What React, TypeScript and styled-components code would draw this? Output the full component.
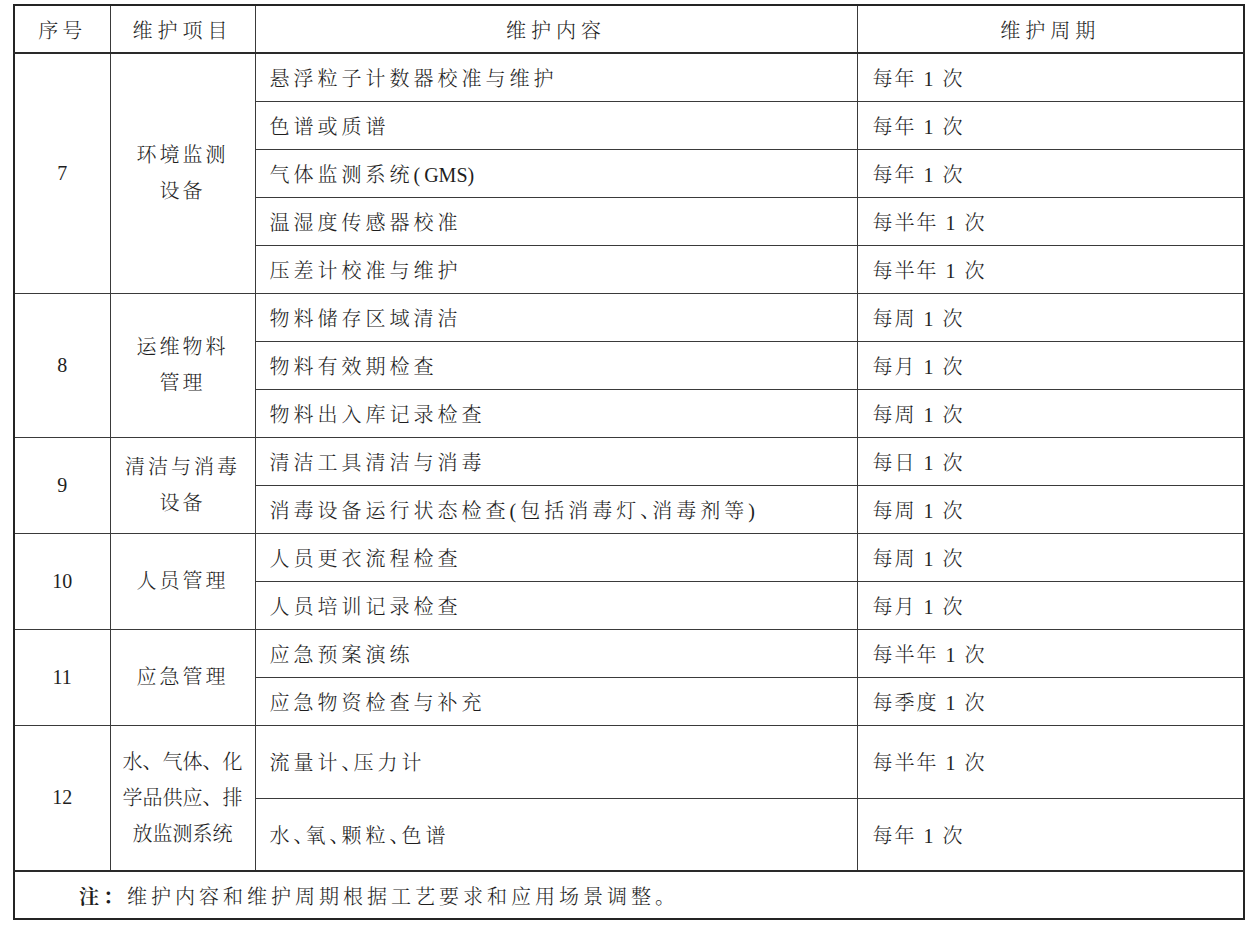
import React from "react";
import styled, { createGlobalStyle } from "styled-components";

const GlobalStyle = createGlobalStyle`
  html, body { margin: 0; padding: 0; background: #ffffff; }
  body {
    font-family: "Liberation Serif", "Noto Serif CJK SC", "Noto Sans CJK SC", serif;
    color: #1e1e1e;
  }
`;

const Page = styled.div`
  padding: 4px 13px 0 13px;
  width: 1230px;
`;

const Table = styled.table`
  width: 1230px;
  table-layout: fixed;
  border-collapse: collapse;
  border: 2px solid #242424;
  font-size: 20px;
  font-weight: 300;
`;

const HeadCell = styled.th<{ $spacing?: number }>`
  height: 46px;
  padding: 0;
  font-weight: 300;
  text-align: center;
  vertical-align: middle;
  letter-spacing: ${(p) => p.$spacing ?? 5}px;
  border: 1px solid #3a3a3a;
  border-bottom: 2px solid #2a2a2a;
`;

const Row = styled.tr<{ $h: number }>`
  height: ${(p) => p.$h}px;
`;

const NoCell = styled.td`
  padding: 0;
  text-align: center;
  vertical-align: middle;
  border: 1px solid #3a3a3a;
`;

const ItemCell = styled.td<{ $spacing: number }>`
  padding: 0 4px;
  text-align: center;
  vertical-align: middle;
  line-height: 36px;
  letter-spacing: ${(p) => p.$spacing}px;
  border: 1px solid #3a3a3a;
`;

const ContentCell = styled.td`
  padding: 0 0 0 14px;
  text-align: left;
  vertical-align: middle;
  letter-spacing: 4px;
  white-space: nowrap;
  border: 1px solid #3a3a3a;
`;

const PeriodCell = styled.td`
  padding: 0 0 0 15px;
  text-align: left;
  vertical-align: middle;
  letter-spacing: 2px;
  border: 1px solid #3a3a3a;
`;

const NoteCell = styled.td`
  height: 46px;
  padding: 0 0 0 64px;
  vertical-align: middle;
  letter-spacing: 4px;
  border-top: 2px solid #2a2a2a;
`;

const Bold = styled.b`
  font-weight: 700;
`;

/* narrow enumeration comma, as set in the original print */
const Comma = styled.span`
  letter-spacing: -8px;
`;

const Latin = styled.span`
  letter-spacing: 0;
`;

/* render a string, tightening 、 and Latin runs */
function Rich({ text }: { text: string }) {
  const parts = text.split(/(、|[A-Za-z]+)/).filter((s) => s !== "");
  return (
    <>
      {parts.map((p, i) =>
        p === "、" ? (
          <Comma key={i}>、</Comma>
        ) : /^[A-Za-z]+$/.test(p) ? (
          <Latin key={i}>{p}</Latin>
        ) : (
          <React.Fragment key={i}>{p}</React.Fragment>
        )
      )}
    </>
  );
}

type Group = {
  no: string;
  item: string[];
  spacing: number;
  rowH: number;
  rows: [string, string][];
};

const groups: Group[] = [
  {
    no: "7",
    item: ["环境监测", "设备"],
    spacing: 3,
    rowH: 48,
    rows: [
      ["悬浮粒子计数器校准与维护", "每年 1 次"],
      ["色谱或质谱", "每年 1 次"],
      ["气体监测系统(GMS)", "每年 1 次"],
      ["温湿度传感器校准", "每半年 1 次"],
      ["压差计校准与维护", "每半年 1 次"],
    ],
  },
  {
    no: "8",
    item: ["运维物料", "管理"],
    spacing: 3,
    rowH: 48,
    rows: [
      ["物料储存区域清洁", "每周 1 次"],
      ["物料有效期检查", "每月 1 次"],
      ["物料出入库记录检查", "每周 1 次"],
    ],
  },
  {
    no: "9",
    item: ["清洁与消毒", "设备"],
    spacing: 3,
    rowH: 48,
    rows: [
      ["清洁工具清洁与消毒", "每日 1 次"],
      ["消毒设备运行状态检查(包括消毒灯、消毒剂等)", "每周 1 次"],
    ],
  },
  {
    no: "10",
    item: ["人员管理"],
    spacing: 3,
    rowH: 48,
    rows: [
      ["人员更衣流程检查", "每周 1 次"],
      ["人员培训记录检查", "每月 1 次"],
    ],
  },
  {
    no: "11",
    item: ["应急管理"],
    spacing: 3,
    rowH: 48,
    rows: [
      ["应急预案演练", "每半年 1 次"],
      ["应急物资检查与补充", "每季度 1 次"],
    ],
  },
  {
    no: "12",
    item: ["水、气体、化", "学品供应、排", "放监测系统"],
    spacing: 0,
    rowH: 73,
    rows: [
      ["流量计、压力计", "每半年 1 次"],
      ["水、氧、颗粒、色谱", "每年 1 次"],
    ],
  },
];

export default function App() {
  return (
    <>
      <GlobalStyle />
      <Page>
        <Table>
          <colgroup>
            <col style={{ width: 96 }} />
            <col style={{ width: 145 }} />
            <col style={{ width: 602 }} />
            <col style={{ width: 387 }} />
          </colgroup>
          <thead>
            <tr>
              <HeadCell $spacing={4}>序号</HeadCell>
              <HeadCell>维护项目</HeadCell>
              <HeadCell>维护内容</HeadCell>
              <HeadCell>维护周期</HeadCell>
            </tr>
          </thead>
          <tbody>
            {groups.map((g) =>
              g.rows.map((r, i) => (
                <Row key={g.no + "-" + i} $h={g.rowH}>
                  {i === 0 && (
                    <>
                      <NoCell rowSpan={g.rows.length}>{g.no}</NoCell>
                      <ItemCell rowSpan={g.rows.length} $spacing={g.spacing}>
                        {g.item.map((line, k) => (
                          <React.Fragment key={k}>
                            {k > 0 && <br />}
                            {line}
                          </React.Fragment>
                        ))}
                      </ItemCell>
                    </>
                  )}
                  <ContentCell>
                    <Rich text={r[0]} />
                  </ContentCell>
                  <PeriodCell>{r[1]}</PeriodCell>
                </Row>
              ))
            )}
            <tr>
              <NoteCell colSpan={4}>
                <Bold>注：</Bold>维护内容和维护周期根据工艺要求和应用场景调整。
              </NoteCell>
            </tr>
          </tbody>
        </Table>
      </Page>
    </>
  );
}
